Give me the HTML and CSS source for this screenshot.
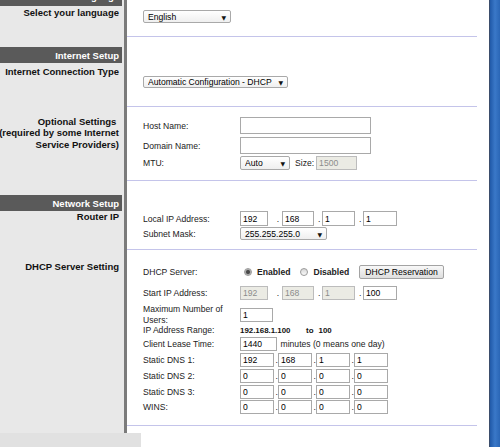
FILE: index.html
```html
<!DOCTYPE html>
<html lang="en">
<head>
    <meta charset="UTF-8">
    <title>Basic Setup</title>
    <link rel="stylesheet" href="styles.css">
</head>
<body>
<div class="screen">
    <div class="page">
        <div class="row row-cut">
            <div class="side"><div class="bar">Language</div></div>
            <div class="main"></div>
        </div>

        <div class="row sec sec-lang">
            <div class="side"><div class="label"><span>Select your language</span></div></div>
            <div class="main">
                <div class="field field-lang">
                    <span class="sel sel-lang"><select><option>English</option></select></span>
                </div>
            </div>
        </div>

        <div class="row head head-internet">
            <div class="side"><div class="bar">Internet Setup</div></div>
            <div class="main"></div>
        </div>

        <div class="row sec sec-type">
            <div class="side"><div class="label"><span>Internet Connection Type</span></div></div>
            <div class="main">
                <div class="field field-conn">
                    <span class="sel sel-conn"><select><option>Automatic Configuration - DHCP</option></select></span>
                </div>
            </div>
        </div>

        <div class="row sec sec-optional">
            <div class="side">
                <div class="label">
                    <span>Optional Settings&nbsp;</span>
                    <span>(required by some Internet</span>
                    <span>Service Providers)</span>
                </div>
            </div>
            <div class="main">
                <div class="field field-tall">
                    <span class="lbl">Host Name:</span><input class="txt txt-name" type="text">
                </div>
                <div class="field field-tall f-domain">
                    <span class="lbl">Domain Name:</span><input class="txt txt-name" type="text">
                </div>
                <div class="field f-mtu">
                    <span class="lbl">MTU:</span>
                    <span class="sel sel-mtu"><select><option>Auto</option></select></span>
                    <span class="unit">Size:</span><input class="txt txt-size" type="text" value="1500" disabled>
                </div>
            </div>
        </div>

        <div class="row head head-network">
            <div class="side"><div class="bar">Network Setup</div></div>
            <div class="main"></div>
        </div>

        <div class="row sec sec-router">
            <div class="side"><div class="label"><span>Router IP</span></div></div>
            <div class="main">
                <div class="field field-ip">
                    <span class="lbl">Local IP Address:</span>
                    <input class="txt oct-a" type="text" value="192"><span class="dot dot-wide">.</span>
                    <input class="txt oct-b" type="text" value="168"><span class="dot">.</span>
                    <input class="txt oct-c" type="text" value="1"><span class="dot">.</span>
                    <input class="txt oct-d" type="text" value="1">
                </div>
                <div class="field f-mask">
                    <span class="lbl">Subnet Mask:</span>
                    <span class="sel sel-mask"><select><option>255.255.255.0</option></select></span>
                </div>
            </div>
        </div>

        <div class="row sec sec-dhcp">
            <div class="side"><div class="label"><span>DHCP Server Setting</span></div></div>
            <div class="main">
                <div class="field">
                    <span class="lbl">DHCP Server:</span>
                    <input class="radio" type="radio" name="dhcp" checked><span class="opt">Enabled</span>
                    <input class="radio" type="radio" name="dhcp"><span class="opt">Disabled</span>
                    <button class="btn" type="button">DHCP Reservation</button>
                </div>
                <div class="field f-start">
                    <span class="lbl">Start IP Address:</span>
                    <input class="txt oct-a" type="text" value="192" disabled><span class="dot dot-wide">.</span>
                    <input class="txt oct-b" type="text" value="168" disabled><span class="dot">.</span>
                    <input class="txt oct-c" type="text" value="1" disabled><span class="dot">.</span>
                    <input class="txt oct-d" type="text" value="100">
                </div>
                <div class="field f-users">
                    <span class="lbl lbl-wrap">Maximum Number of<br>Users:</span>
                    <input class="txt txt-users" type="text" value="1">
                </div>
                <div class="field f-range">
                    <span class="lbl">IP Address Range:</span>
                    <span class="value">192.168.1.100</span><span class="value to">to</span><span class="value">100</span>
                </div>
                <div class="field">
                    <span class="lbl">Client Lease Time:</span>
                    <input class="txt txt-lease" type="text" value="1440"><span class="note">minutes (0 means one day)</span>
                </div>
                <div class="field dns">
                    <span class="lbl">Static DNS 1:</span>
                    <input class="txt oct" type="text" value="192"><span class="dot">.</span>
                    <input class="txt oct" type="text" value="168"><span class="dot">.</span>
                    <input class="txt oct" type="text" value="1"><span class="dot">.</span>
                    <input class="txt oct" type="text" value="1">
                </div>
                <div class="field dns">
                    <span class="lbl">Static DNS 2:</span>
                    <input class="txt oct" type="text" value="0"><span class="dot">.</span>
                    <input class="txt oct" type="text" value="0"><span class="dot">.</span>
                    <input class="txt oct" type="text" value="0"><span class="dot">.</span>
                    <input class="txt oct" type="text" value="0">
                </div>
                <div class="field dns">
                    <span class="lbl">Static DNS 3:</span>
                    <input class="txt oct" type="text" value="0"><span class="dot">.</span>
                    <input class="txt oct" type="text" value="0"><span class="dot">.</span>
                    <input class="txt oct" type="text" value="0"><span class="dot">.</span>
                    <input class="txt oct" type="text" value="0">
                </div>
                <div class="field dns f-wins">
                    <span class="lbl">WINS:</span>
                    <input class="txt oct" type="text" value="0"><span class="dot">.</span>
                    <input class="txt oct" type="text" value="0"><span class="dot">.</span>
                    <input class="txt oct" type="text" value="0"><span class="dot">.</span>
                    <input class="txt oct" type="text" value="0">
                </div>
            </div>
        </div>

        <div class="row row-end">
            <div class="side"></div>
            <div class="main"></div>
        </div>
        <div class="footer"></div>
    </div>
    <div class="edge"></div>
</div>
</body>
</html>
```

FILE: styles.css
```css
body {
    margin: 0;
    font-family: "Liberation Sans", Arial, sans-serif;
    color: #222;
}

.screen {
    display: flex;
    height: 447px;
    overflow: hidden;
    background: #fff;
}

.page {
    width: 489px;
    flex: none;
}

/* window frame on the right */
.edge {
    flex: 1;
    border-left: 1px solid #3b4d6b;
    background: linear-gradient(to right, #2059a8, #3a78c8 50%, #2a66b6);
}

.row {
    display: flex;
}

.side {
    width: 124px;
    flex: none;
    background: #e8e8e8;
    border-right: 3px solid #7b7b7b;
    font-size: 9.5px;
    font-weight: bold;
    line-height: 11px;
    text-align: right;
    color: #111;
}

/* lines are right-aligned and spill out to the left when too long */
.side .label {
    display: flex;
    flex-direction: column;
    align-items: flex-end;
    padding-right: 5px;
}

.side .label span {
    white-space: nowrap;
}

.bar {
    box-sizing: border-box;
    height: 16px;
    padding: 2px 3px 0 0;
    margin-right: 2px;
    line-height: 14px;
    background: #5a5a5a;
    color: #fff;
}

.main {
    flex: 1;
    min-width: 0;
    margin-right: 12px;
    padding-left: 16px;
    font-size: 8.6px;
}

.sec .main {
    border-bottom: 1px solid #c4c4ea;
}

/* section that is scrolled off the top */
.row-cut {
    height: 6px;
}

.row-cut .side {
    display: flex;
    flex-direction: column;
    justify-content: flex-end;
    overflow: hidden;
}

.row-cut .bar {
    flex: none;
    padding-top: 0;
}

.head-internet .side {
    padding-top: 10px;
}

.head-network .side {
    padding-top: 14px;
}

.sec-lang .label { padding-top: 1px; }
.sec-lang .main { padding-top: 4px; padding-bottom: 13px; }

.sec-type .label { padding-top: 3px; }
.sec-type .main { padding-top: 13px; padding-bottom: 18px; }

.sec-optional .label { padding-top: 9px; line-height: 11.3px; }
.sec-optional .main { padding-top: 10px; padding-bottom: 10px; }

.sec-router .main { padding-bottom: 9px; }

.sec-dhcp .label { padding-top: 11px; }
.sec-dhcp .main { padding-top: 15px; padding-bottom: 11px; }

.row-end {
    height: 7px;
}

.footer {
    width: 141px;
    height: 14px;
    background: #e1e1e1;
}

/* form rows */
.field {
    display: flex;
    align-items: center;
    height: 14px;
    white-space: nowrap;
}

.field + .field {
    margin-top: 2px;
}

.field-lang { height: 13px; }
.field-conn { height: 12px; }
.field-tall { height: 17px; }
.field-ip { height: 15px; }
.field.f-domain { margin-top: 3px; }
.field.f-mask { margin-top: 1px; height: 13px; }
.field.f-start { margin-top: 7px; }
.field.f-users { margin-top: 4px; height: 21px; }
.field.f-range { margin-top: 0; height: 10px; }
.field.f-wins { margin-top: 1px; }

.lbl {
    width: 97px;
    flex: none;
}

.lbl-wrap {
    white-space: normal;
    line-height: 10.5px;
}

.txt {
    box-sizing: border-box;
    height: 100%;
    margin: 0;
    padding: 0 2px;
    border: 1px solid #a9a9a9;
    background: #fff;
    font: inherit;
    color: #000;
}

.txt:disabled {
    background: #ebebe4;
    border-color: #bcbcbc;
    color: #8c8c8c;
}

.txt-name { width: 131px; }
.txt-size { width: 41px; }
.txt-users { width: 33px; height: 14px; }
.txt-lease { width: 37px; }

.oct { width: 34px; }
.oct-a { width: 28px; }
.oct-b { width: 32px; }
.oct-c { width: 33px; }
.oct-d { width: 34px; }

.dot {
    padding: 0 1.6px 0 4px;
}

.dot-wide {
    padding: 0 2.9px 0 8.7px;
}

.dns .dot {
    padding: 0 0 0 1.6px;
}

.unit {
    margin: 0 2px 0 5px;
}

.note {
    margin-left: 3.5px;
}

.value {
    font-weight: bold;
    font-size: 7.9px;
    color: #111;
}

.value.to {
    margin: 0 5px 0 15.6px;
}

/* drop-downs */
.sel {
    position: relative;
    display: inline-flex;
    height: 100%;
}

.sel select {
    -webkit-appearance: none;
    appearance: none;
    box-sizing: border-box;
    width: 100%;
    height: 100%;
    margin: 0;
    padding: 0 0 0 4px;
    border: 1px solid #a9a9a9;
    border-radius: 2px;
    background: linear-gradient(#fff, #efefef);
    font: inherit;
    color: #000;
}

.sel::after {
    content: "\25BC";
    position: absolute;
    right: 5px;
    top: 50%;
    transform: translateY(-50%);
    font-family: "DejaVu Sans", sans-serif;
    font-size: 6px;
    color: #111;
    pointer-events: none;
}

.sel-lang { width: 88px; }
.sel-conn { width: 145px; }
.sel-mtu { width: 50px; }
.sel-mask { width: 87px; }

/* radios and button */
.radio {
    -webkit-appearance: none;
    appearance: none;
    box-sizing: border-box;
    width: 8px;
    height: 8px;
    margin: 0 5px 0 4px;
    border: 1px solid #9a9a9a;
    border-radius: 50%;
    background: linear-gradient(#d6d6d6, #fafafa);
}

.radio:checked {
    background: radial-gradient(circle, #4a4a4a 0 1.5px, #aaa 2.5px, #e6e6e6 4px);
}

.opt {
    font-weight: bold;
    margin-right: 6px;
}

.btn {
    box-sizing: border-box;
    height: 14px;
    margin: 0 0 0 4px;
    padding: 0 5px;
    border: 1px solid #a3a3a3;
    border-radius: 2px;
    background: linear-gradient(#f8f8f8, #dedede);
    font: inherit;
    color: #000;
}
```
